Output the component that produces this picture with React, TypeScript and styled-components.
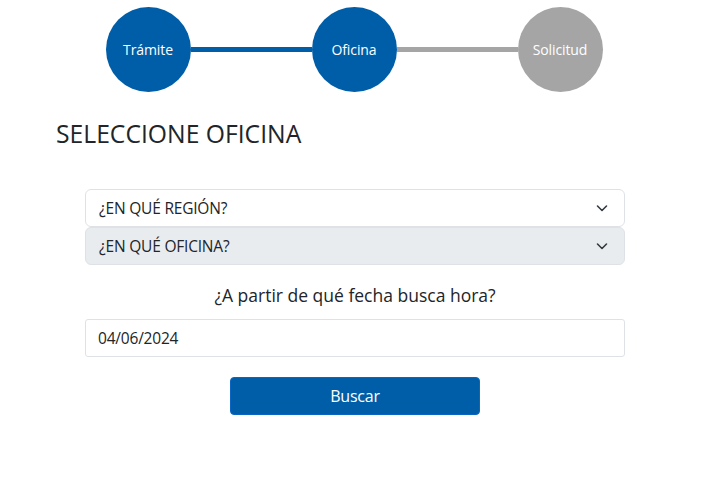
import React, { useState } from "react";
import styled, { createGlobalStyle } from "styled-components";

const GlobalStyle = createGlobalStyle`
  body {
    margin: 0;
    background: #fff;
    font-family: "Open Sans", "Noto Sans", sans-serif;
    color: #212529;
  }
`;

const Page = styled.div`
  width: 596px;
  margin: 0 auto;
  padding-top: 7px;
`;

const Stepper = styled.div`
  display: flex;
  align-items: center;
  justify-content: center;
`;

const Step = styled.div<{ $active: boolean }>`
  width: 85px;
  height: 85px;
  border-radius: 50%;
  flex-shrink: 0;
  display: flex;
  align-items: center;
  justify-content: center;
  color: #fff;
  font-size: 14px;
  letter-spacing: -0.1px;
  background: ${(p) => (p.$active ? "#005ea8" : "#a5a5a5")};
`;

const Line = styled.div<{ $active: boolean }>`
  width: 121px;
  height: 5px;
  background: ${(p) => (p.$active ? "#005ea8" : "#a5a5a5")};
`;

const Title = styled.h1`
  margin: 27px 0 0 0;
  font-size: 24.7px;
  font-weight: 400;
  line-height: 30px;
`;

const Form = styled.div`
  margin: 40px 27px 0 29px;
  display: flex;
  flex-direction: column;
`;

const SelectBox = styled.div<{ $disabled?: boolean }>`
  height: 38px;
  box-sizing: border-box;
  border: 1px solid #dee2e6;
  border-radius: 6px;
  padding: 0 16px 0 13px;
  display: flex;
  align-items: center;
  justify-content: space-between;
  font-size: 15.5px;
  letter-spacing: -0.2px;
  background: ${(p) => (p.$disabled ? "#e9ecef" : "#fff")};
`;

const Chevron = () => (
  <svg width="12" height="12" viewBox="0 0 12 12">
    <path
      d="M1.5 4l4.5 4.5 4.5-4.5"
      fill="none"
      stroke="#343a40"
      strokeWidth="1.6"
      strokeLinecap="round"
      strokeLinejoin="round"
    />
  </svg>
);

const Label = styled.div`
  margin-top: 18px;
  text-align: center;
  font-size: 17.5px;
  line-height: 24px;
`;

const DateInput = styled.input`
  margin-top: 12px;
  height: 38px;
  box-sizing: border-box;
  border: 1px solid #dee2e6;
  border-radius: 3px;
  padding: 0 12px;
  font-family: inherit;
  font-size: 15.5px;
  letter-spacing: -0.2px;
  color: #212529;
  outline: none;
`;

const Button = styled.button`
  align-self: center;
  margin-top: 20px;
  width: 250px;
  height: 38px;
  border: 1px solid #0b66c3;
  border-radius: 4px;
  background: #005ea8;
  color: #fff;
  font-family: inherit;
  font-size: 16px;
  letter-spacing: -0.2px;
  cursor: pointer;
`;

export default function App() {
  const [date, setDate] = useState("04/06/2024");
  return (
    <>
      <GlobalStyle />
      <Page>
        <Stepper>
          <Step $active>Trámite</Step>
          <Line $active />
          <Step $active>Oficina</Step>
          <Line $active={false} />
          <Step $active={false}>Solicitud</Step>
        </Stepper>
        <Title>SELECCIONE OFICINA</Title>
        <Form>
          <SelectBox>
            <span>¿EN QUÉ REGIÓN?</span>
            <Chevron />
          </SelectBox>
          <SelectBox $disabled>
            <span>¿EN QUÉ OFICINA?</span>
            <Chevron />
          </SelectBox>
          <Label>¿A partir de qué fecha busca hora?</Label>
          <DateInput value={date} onChange={(e) => setDate(e.target.value)} />
          <Button>Buscar</Button>
        </Form>
      </Page>
    </>
  );
}
